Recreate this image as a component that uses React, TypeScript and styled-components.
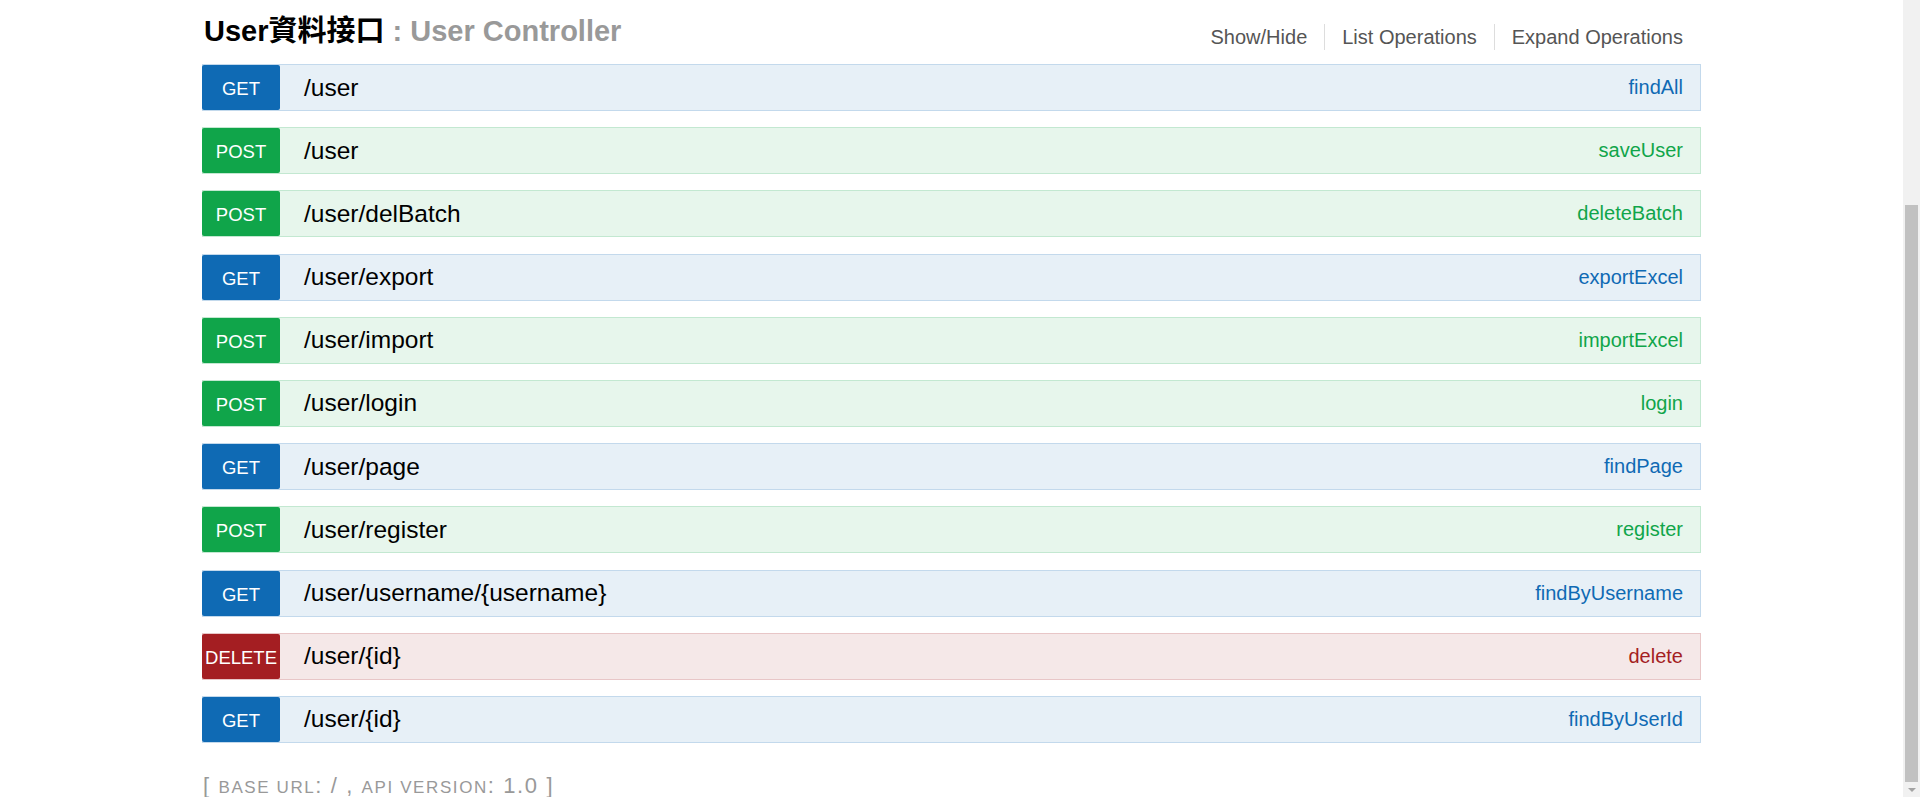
import styled, { createGlobalStyle } from 'styled-components';

type Method = 'GET' | 'POST' | 'DELETE';

const palette: Record<Method, { main: string; bg: string; border: string }> = {
    GET: { main: '#0f6ab4', bg: '#e7f0f7', border: '#c3d9ec' },
    POST: { main: '#10a54a', bg: '#e7f6ec', border: '#c3e8d1' },
    DELETE: { main: '#a41e22', bg: '#f5e8e8', border: '#e8c6c7' },
};

const endpoints: { method: Method; path: string; name: string }[] = [
    { method: 'GET', path: '/user', name: 'findAll' },
    { method: 'POST', path: '/user', name: 'saveUser' },
    { method: 'POST', path: '/user/delBatch', name: 'deleteBatch' },
    { method: 'GET', path: '/user/export', name: 'exportExcel' },
    { method: 'POST', path: '/user/import', name: 'importExcel' },
    { method: 'POST', path: '/user/login', name: 'login' },
    { method: 'GET', path: '/user/page', name: 'findPage' },
    { method: 'POST', path: '/user/register', name: 'register' },
    { method: 'GET', path: '/user/username/{username}', name: 'findByUsername' },
    { method: 'DELETE', path: '/user/{id}', name: 'delete' },
    { method: 'GET', path: '/user/{id}', name: 'findByUserId' },
];

const GlobalStyle = createGlobalStyle`
    body {
        margin: 0;
        background: #fff;
        font-family: "Liberation Sans", Arial, "Noto Sans CJK TC", sans-serif;
    }
`;

const Page = styled.div`
    display: flex;
    height: 797px;
    overflow: hidden;
`;

const Main = styled.main`
    flex: 1;
    min-width: 0;
`;

const Wrap = styled.div`
    width: 1499px;
    margin: 0 auto;
`;

/* page scrollbar, scrolled down to the end */
const ScrollTrack = styled.div`
    display: flex;
    flex-direction: column;
    width: 17px;
    padding-top: 205px;
    box-sizing: border-box;
    background: #f1f1f1;
`;

const ScrollThumb = styled.div`
    flex: 1;
    margin: 0 2px;
    background: #c1c1c1;
`;

const ScrollArrow = styled.div`
    display: flex;
    align-items: center;
    justify-content: center;
    height: 15px;
    &::after {
        content: '';
        border-left: 4px solid transparent;
        border-right: 4px solid transparent;
        border-top: 4px solid #a3a3a3;
    }
`;

const Heading = styled.div`
    display: flex;
    justify-content: space-between;
    align-items: flex-start;
    height: 64px;
`;

const Title = styled.h2`
    margin: 17px 0 0 2px;
    font-size: 29px;
    line-height: 1;
    font-weight: bold;
    color: #999;
    white-space: nowrap;
    a {
        color: #000;
        text-decoration: none;
    }
`;

const Options = styled.ul`
    display: flex;
    list-style: none;
    margin: 24px 18px 0 0;
    padding: 0;
`;

const Option = styled.li`
    padding: 0 17px;
    border-right: 1px solid #ddd;
    font-size: 20px;
    line-height: 26px;
    color: #555;
    &:last-child {
        border-right: none;
        padding-right: 0;
    }
`;

const List = styled.ul`
    display: flex;
    flex-direction: column;
    gap: 16.2px;
    list-style: none;
    margin: 0;
    padding: 0;
`;

const Row = styled.li<{ $method: Method }>`
    display: flex;
    align-items: center;
    height: 47px;
    box-sizing: border-box;
    background: ${p => palette[p.$method].bg};
    border: 1px solid ${p => palette[p.$method].border};
`;

const Badge = styled.span<{ $method: Method }>`
    display: flex;
    align-items: center;
    justify-content: center;
    align-self: stretch;
    width: 78px;
    margin-left: -1px;
    padding-top: 3px;
    box-sizing: border-box;
    border-radius: 2px;
    background: ${p => palette[p.$method].main};
    color: #fff;
    font-size: 18.5px;
`;

const Path = styled.span`
    padding-left: 24px;
    font-size: 24.5px;
    color: #000;
`;

const OpName = styled.span<{ $method: Method }>`
    margin-left: auto;
    padding-right: 17px;
    font-size: 20px;
    color: ${p => palette[p.$method].main};
`;

const Footer = styled.h4`
    margin: 32px 0 0 1px;
    font-size: 22px;
    line-height: 1;
    font-weight: normal;
    letter-spacing: 1.6px;
    color: #999;
    white-space: nowrap;
`;

/* small-caps words of the footer */
const Caps = styled.span`
    font-size: 17px;
    text-transform: uppercase;
`;

export default function App() {
    return (
        <Page>
            <GlobalStyle />
            <Main>
                <Wrap>
                    <Heading>
                        <Title>
                            <a href="#">User資料接口</a> : User Controller
                        </Title>
                        <Options>
                            <Option>Show/Hide</Option>
                            <Option>List Operations</Option>
                            <Option>Expand Operations</Option>
                        </Options>
                    </Heading>
                    <List>
                        {endpoints.map((e, i) => (
                            <Row key={i} $method={e.method}>
                                <Badge $method={e.method}>{e.method}</Badge>
                                <Path>{e.path}</Path>
                                <OpName $method={e.method}>{e.name}</OpName>
                            </Row>
                        ))}
                    </List>
                    <Footer>
                        [ <Caps>base url</Caps>: / , <Caps>api version</Caps>: 1.0 ]
                    </Footer>
                </Wrap>
            </Main>
            <ScrollTrack>
                <ScrollThumb />
                <ScrollArrow />
            </ScrollTrack>
        </Page>
    );
}
